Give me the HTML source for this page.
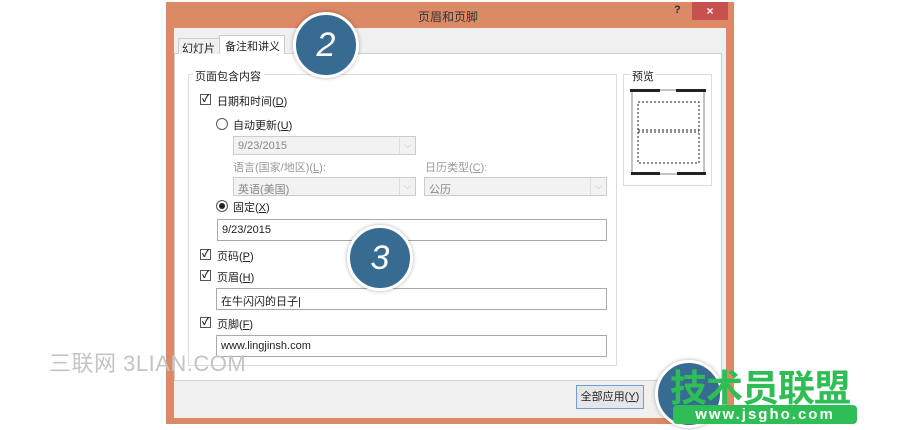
<!DOCTYPE html>
<html><head><meta charset="utf-8"><style>
*{box-sizing:border-box;margin:0;padding:0}
body{width:900px;height:430px;background:#fff;position:relative;overflow:hidden;font-family:"Liberation Sans","Noto Sans CJK SC",sans-serif;font-size:11px;color:#222}
.a{position:absolute}
.dlg{left:166px;top:2px;width:568px;height:422px;background:#dc8a65}
.inner{left:174px;top:28px;width:552px;height:390px;background:#f0f0f0}
.panel{left:174px;top:53px;width:548px;height:328px;background:#fff;border:1px solid #d0d0d0}
.grp{border:1px solid #dcdcdc}
.lbl{white-space:nowrap;font-size:11px}
.cb{width:11px;height:11px;border:1px solid #555;background:#fff;font-size:10px;line-height:9px;text-align:center;font-weight:bold}
.rb{width:12px;height:12px;border:1px solid #555;border-radius:50%;background:#fff}
.box{border:1px solid #aaa;background:#fff;padding:4px 4px 0;font-size:11px}
.dis{border:1px solid #ccc;background:#f2f2f2;color:#888;padding:3px 4px 0}
.dd{position:absolute;right:0;top:0;width:16px;height:100%;border-left:1px solid #ddd;color:#bbb;font-size:9px;text-align:center;line-height:17px}
.circ{border-radius:50%;background:#386b91;border:3px solid #fff;box-shadow:0 0 4px rgba(0,0,0,.3);color:#fff;font-size:34px;text-align:center;font-style:italic;font-family:"Liberation Sans",sans-serif}
.gray{color:#999}
</style></head><body>
<div class="a dlg"></div>
<div class="a lbl" style="left:418px;top:8px;font-size:12px;color:#333">页眉和页脚</div>
<div class="a" style="left:674px;top:4px;font-size:11px;font-weight:bold;color:#333">?</div>
<div class="a" style="left:692px;top:2px;width:36px;height:18px;background:#c75050;color:#fff;text-align:center;font-size:12px;line-height:18px;font-weight:bold">×</div>
<div class="a inner"></div>
<div class="a panel"></div>
<div class="a" style="left:178px;top:38px;width:42px;height:16px;border:1px solid #ccc;border-bottom:none;background:#f0f0f0"></div>
<div class="a lbl" style="left:182px;top:40px">幻灯片</div>
<div class="a" style="left:219px;top:35px;width:66px;height:19px;border:1px solid #ccc;border-bottom:none;background:#fff"></div>
<div class="a lbl" style="left:225px;top:38px">备注和讲义</div>

<div class="a grp" style="left:188px;top:74px;width:429px;height:292px"></div>
<div class="a lbl" style="left:193px;top:68px;background:#fff;padding:0 3px 0 2px">页面包含内容</div>
<div class="a grp" style="left:623px;top:74px;width:89px;height:112px"></div>
<div class="a lbl" style="left:630px;top:68px;background:#fff;padding:0 2px">预览</div>
<svg class="a" style="left:630px;top:88px" width="76" height="90">
<rect x="2" y="2" width="72" height="84" fill="#fff" stroke="#888"/>
<rect x="0" y="1" width="30" height="3" fill="#222"/><rect x="46" y="1" width="30" height="3" fill="#222"/>
<rect x="1" y="84" width="29" height="3" fill="#222"/><rect x="47" y="84" width="29" height="3" fill="#222"/>
<rect x="8" y="14" width="61" height="61" fill="none" stroke="#222" stroke-dasharray="2,2"/>
<line x1="8" y1="42" x2="69" y2="42" stroke="#222" stroke-dasharray="2,2"/>
<line x1="8" y1="44" x2="69" y2="44" stroke="#222" stroke-dasharray="2,2"/>
</svg>

<div class="a cb" style="left:200px;top:94px">✓</div>
<div class="a lbl" style="left:217px;top:93px">日期和时间(<u>D</u>)</div>
<div class="a rb" style="left:216px;top:118px"></div>
<div class="a lbl" style="left:233px;top:117px">自动更新(<u>U</u>)</div>
<div class="a dis" style="left:233px;top:136px;width:183px;height:19px">9/23/2015<div class="dd">⌵</div></div>
<div class="a lbl gray" style="left:233px;top:159px">语言(国家/地区)(<u>L</u>):</div>
<div class="a lbl gray" style="left:425px;top:159px">日历类型(<u>C</u>):</div>
<div class="a dis" style="left:233px;top:177px;width:183px;height:19px">英语(美国)<div class="dd">⌵</div></div>
<div class="a dis" style="left:424px;top:177px;width:183px;height:19px">公历<div class="dd">⌵</div></div>
<div class="a rb" style="left:216px;top:200px"></div>
<div class="a" style="left:219px;top:203px;width:6px;height:6px;border-radius:50%;background:#222"></div>
<div class="a lbl" style="left:233px;top:199px">固定(<u>X</u>)</div>
<div class="a box" style="left:217px;top:219px;width:390px;height:22px">9/23/2015</div>
<div class="a cb" style="left:200px;top:249px">✓</div>
<div class="a lbl" style="left:217px;top:248px">页码(<u>P</u>)</div>
<div class="a cb" style="left:200px;top:270px">✓</div>
<div class="a lbl" style="left:217px;top:269px">页眉(<u>H</u>)</div>
<div class="a box" style="left:216px;top:288px;width:391px;height:22px">在牛闪闪的日子|</div>
<div class="a cb" style="left:200px;top:317px">✓</div>
<div class="a lbl" style="left:217px;top:316px">页脚(<u>F</u>)</div>
<div class="a box" style="left:216px;top:335px;width:391px;height:22px">www.lingjinsh.com</div>

<div class="a" style="left:576px;top:385px;width:68px;height:24px;border:1px solid #6aa0d8;background:#e6e6e6;text-align:center;line-height:22px;font-size:11px">全部应用(<u>Y</u>)</div>

<div class="a lbl" style="left:49px;top:346px;font-size:22px;color:#c4c4c4;letter-spacing:0.5px">三联网 3LIAN.COM</div>

<div class="a circ" style="left:293px;top:12px;width:66px;height:66px;line-height:60px">2</div>
<div class="a circ" style="left:347px;top:225px;width:66px;height:66px;line-height:60px">3</div>
<div class="a circ" style="left:655px;top:360px;width:68px;height:68px;line-height:62px"></div>
<div class="a lbl" style="left:670px;top:358px;font-size:37px;font-weight:bold;color:#2fbe55;letter-spacing:-1px">技术员联盟</div>
<div class="a" style="left:673px;top:405px;width:184px;height:19px;background:#2fbe55;border-radius:4px;color:#fff;font-size:15px;font-weight:bold;text-align:center;line-height:19px;letter-spacing:2px">www.jsgho.com</div>
</body></html>
